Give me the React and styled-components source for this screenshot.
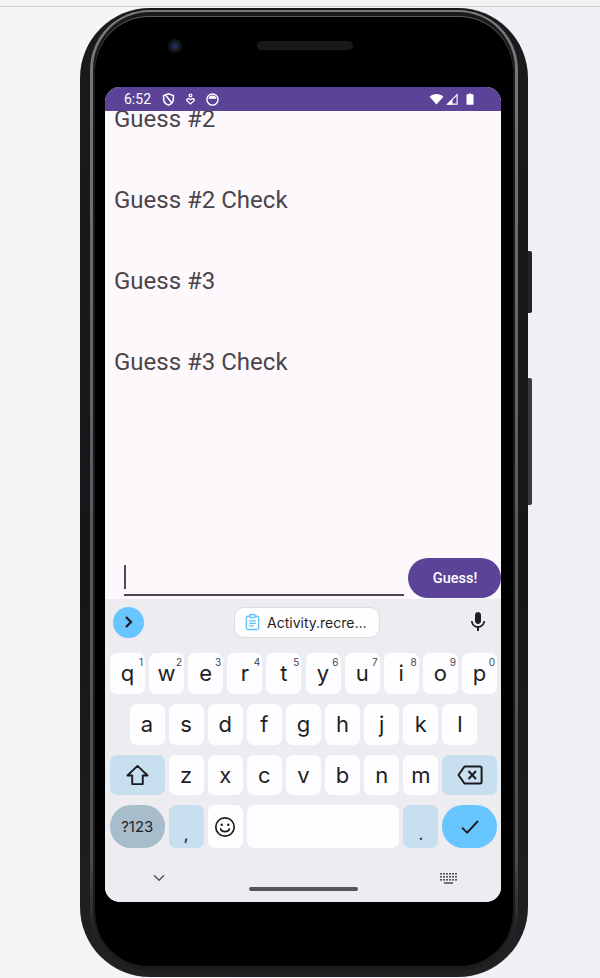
import React from "react";
import styled, { createGlobalStyle } from "styled-components";

const Global = createGlobalStyle`
  html, body { margin: 0; padding: 0; background: #f2f1f5; }
  body { font-family: "Roboto", "Liberation Sans", sans-serif; }
  * { box-sizing: border-box; }
`;

const Page = styled.div`
  width: 600px;
  height: 978px;
  overflow: hidden;
  background: linear-gradient(90deg, #f5f4f7 0%, #f5f4f7 13%, #f0eff3 90%);
  display: flex;
  flex-direction: column;
`;
const TopStrip = styled.div`
  height: 7px;
  flex: none;
  background: #f3f3f3;
  border-bottom: 1px solid #cfcfd1;
`;
const Device = styled.div`
  position: relative;
  flex: none;
  width: 448px;
  height: 969px;
  margin: 1px 0 0 80px;
  padding: 2px 10px 6px 10px;
  border-radius: 70px;
  background: linear-gradient(180deg, #1a1a1c 0%, #161618 60%, #212123 100%);
`;
const SideButton = styled.div`
  position: absolute;
  right: -4px;
  top: ${(p) => p.$top}px;
  width: 4px;
  height: ${(p) => p.$h}px;
  border-radius: 0 2px 2px 0;
  background: ${(p) => p.$c};
`;
const Rim = styled.div`
  height: 100%;
  padding: 2px 3px 3px;
  border-radius: 60px;
  background: linear-gradient(180deg, #7a7a7d 0%, #5c5c60 50%, #4c4c4f 88%, #232325 96%, #1c1c1e 100%);
`;
const Bezel = styled.div`
  height: 100%;
  border-radius: 57px;
  background: #1a1a1c;
  padding: 5px 2px 2px;
`;
const Front = styled.div`
  height: 100%;
  border-radius: 54px;
  background: #000;
  box-shadow: 0 -1px 0 #5a5a5e;
  padding: 0 13px 0 10px;
  display: flex;
  flex-direction: column;
`;
const Earpiece = styled.div`
  height: 70px;
  flex: none;
  padding: 20px 0 0 63px;
  display: flex;
  align-items: flex-start;
`;
const Camera = styled.div`
  width: 14px;
  height: 14px;
  margin-top: 2px;
  border-radius: 50%;
  background: radial-gradient(circle, #1c2a52 0 25%, #14151b 45%, #0f0f11 100%);
`;
const Speaker = styled.div`
  width: 96px;
  height: 9px;
  margin: 4px 0 0 75px;
  border-radius: 5px;
  background: #19191a;
`;
const Screen = styled.div`
  width: 396px;
  height: 815px;
  flex: none;
  border-radius: 15px;
  overflow: hidden;
  background: #fdf8fc;
  display: flex;
  flex-direction: column;
`;
const StatusBar = styled.div`
  height: 24px;
  flex: none;
  background: #5b4397;
  color: #fff;
  display: flex;
  align-items: center;
  padding: 0 27px 0 19px;
`;
const Clock = styled.span`
  font-size: 14px;
  line-height: 24px;
  width: 38px;
`;
const StatusIcons = styled.div`
  display: flex;
  align-items: center;
  gap: 11px;
`;
const StatusRight = styled.div`
  margin-left: auto;
  display: flex;
  align-items: center;
  gap: 2px;
`;
const BatterySlot = styled.div`
  display: flex;
  margin-left: 6px;
`;
const Content = styled.div`
  flex: 1;
  min-height: 0;
  overflow: hidden;
  padding-left: 9px;
`;
const GuessList = styled.div`
  margin-top: -32px;
`;
const Guess = styled.div`
  height: 81px;
  line-height: 81px;
  font-size: 24px;
  color: #49454a;
`;
const InputRow = styled.div`
  height: 41px;
  flex: none;
  display: flex;
  padding-left: 19px;
`;
const Field = styled.div`
  width: 280px;
  height: 38px;
  margin-right: 4px;
  border-bottom: 2px solid #4b4656;
  padding: 7px 0 0 0;
`;
const Caret = styled.div`
  width: 2px;
  height: 24px;
  background: #4f4a58;
`;
const GuessButton = styled.button`
  width: 93px;
  height: 40px;
  border: 0;
  border-radius: 20px;
  background: #5b4397;
  color: #fff;
  font: 500 14.5px "Roboto", sans-serif;
  padding: 0 0 0 1px;
`;
const Keyboard = styled.div`
  height: 303px;
  flex: none;
  background: #edecf0;
  display: flex;
  flex-direction: column;
  padding: 0 4px 0 5px;
`;
const Suggestions = styled.div`
  height: 54px;
  flex: none;
  display: flex;
  align-items: center;
  padding: 0 0 8px 3px;
`;
const RoundToggle = styled.div`
  width: 31px;
  height: 31px;
  flex: none;
  border-radius: 50%;
  background: #67c6ff;
  display: flex;
  align-items: center;
  justify-content: center;
`;
const Chip = styled.div`
  width: 146px;
  height: 31px;
  margin-left: 90px;
  flex: none;
  border-radius: 10px;
  border: 1px solid #dcdcdf;
  background: #fefeff;
  display: flex;
  align-items: center;
  gap: 7px;
  padding-left: 10px;
  font-family: "Inter", "Roboto", sans-serif;
  font-size: 14px;
  font-weight: 400;
  color: #1f1f22;
  white-space: nowrap;
`;
const MicSlot = styled.div`
  margin-left: 86px;
  display: flex;
`;
const Keys = styled.div`
  display: flex;
  flex-direction: column;
  gap: 10px;
`;
const KeyRow = styled.div`
  height: ${(p) => p.$h}px;
  display: grid;
  grid-template-columns: repeat(20, 1fr);
  column-gap: 4.11px;
`;
const tones = {
  plain: "#fefdff",
  soft: "#c8dff0",
  mode: "#a8bdcc",
  action: "#67c6ff",
};
const Key = styled.div`
  position: relative;
  grid-column: ${(p) => (p.$start ? `${p.$start} / ` : "")}span ${(p) => p.$span || 2};
  border-radius: ${(p) => (p.$pill ? "21px" : "7px")};
  background: ${(p) => tones[p.$tone || "plain"]};
  color: #1f1f22;
  font-family: "Inter", "Roboto", sans-serif;
  font-size: ${(p) => p.$size || 22}px;
  font-weight: 400;
  line-height: 1;
  display: flex;
  align-items: center;
  justify-content: center;
`;
const Digit = styled.span`
  position: absolute;
  top: 4px;
  right: 2px;
  font-size: 10px;
  font-weight: 400;
  color: #47474c;
`;
const LowPunct = styled.span`
  font-size: 16px;
  font-weight: 500;
  padding-top: 14px;
`;
const NavBar = styled.div`
  flex: 1;
  display: flex;
  align-items: flex-start;
  padding: 26px 0 0 43px;
`;
const HomePill = styled.div`
  width: 109px;
  height: 4px;
  margin: 13px 0 0 84px;
  border-radius: 2px;
  background: #55555a;
`;
const KbdIcon = styled.div`
  margin: -1px 0 0 82px;
  display: flex;
`;

const Shield = () => (
  <svg width="13" height="13" viewBox="0 0 14 15" fill="none" stroke="#fff" strokeWidth="1.8">
    <path d="M7 1 L12.6 3 V7 C12.6 10.4 10.4 12.8 7 14 C3.6 12.8 1.4 10.4 1.4 7 V3 Z" />
    <path d="M4 3 L10.5 11" />
  </svg>
);
const Pin = () => (
  <svg width="9" height="12" viewBox="0 0 10 13" fill="none" stroke="#fff" strokeWidth="1.5">
    <circle cx="5" cy="2.6" r="1.5" />
    <path d="M5 12 L1.2 8.6 C0.4 7.6 1.2 6 2.6 6.2 L5 7.2 L7.4 6.2 C8.8 6 9.6 7.6 8.8 8.6 Z" />
  </svg>
);
const Disc = () => (
  <svg width="13" height="13" viewBox="0 0 14 14">
    <circle cx="7" cy="7" r="6" fill="none" stroke="#fff" strokeWidth="1.5" />
    <path d="M2.6 6.2 C3 3.8 4.8 2.6 7 2.6 C9.2 2.6 11 3.8 11.4 6.2 Z" fill="#fff" />
  </svg>
);
const Wifi = () => (
  <svg width="15" height="12" viewBox="0 0 16 13">
    <path d="M0.5 4 C4.5 0.2 11.5 0.2 15.5 4 L8 12.5 Z" fill="#fff" />
  </svg>
);
const Signal = () => (
  <svg width="12" height="12" viewBox="0 0 13 13">
    <path d="M12 1.8 V12 H1.8 Z" fill="none" stroke="#fff" strokeWidth="1.2" />
    <path d="M7 6.5 V12.5 H0.5 Z" fill="#fff" />
  </svg>
);
const Battery = () => (
  <svg width="8" height="12" viewBox="0 0 9 14">
    <path d="M3 0.5 H6 V1.6 H7.8 C8.3 1.6 8.6 2 8.6 2.4 V13 C8.6 13.5 8.3 13.8 7.8 13.8 H1.2 C0.7 13.8 0.4 13.5 0.4 13 V2.4 C0.4 2 0.7 1.6 1.2 1.6 H3 Z" fill="#fff" />
  </svg>
);
const Chevron = () => (
  <svg width="12" height="14" viewBox="0 0 12 14" fill="none" stroke="#17171c" strokeWidth="2.2">
    <path d="M3 2 L8 7 L3 12" />
  </svg>
);
const Clipboard = () => (
  <svg width="15" height="18" viewBox="0 0 17 19" fill="none" stroke="#62c2fb" strokeWidth="1.5">
    <rect x="1.5" y="3" width="14" height="15" rx="2" />
    <rect x="5.5" y="1" width="6" height="3.6" rx="1" fill="#eaf6ff" />
    <path d="M4.6 8.2 H12.4 M4.6 11 H12.4 M4.6 13.8 H10" />
  </svg>
);
const Mic = () => (
  <svg width="24" height="24" viewBox="0 0 24 24" fill="#1f1f22">
    <path d="M12 14c1.66 0 2.99-1.34 2.99-3L15 5c0-1.66-1.34-3-3-3S9 3.34 9 5v6c0 1.66 1.34 3 3 3zm5.3-3c0 3-2.54 5.1-5.3 5.1S6.7 14 6.7 11H5c0 3.41 2.72 6.23 6 6.72V21h2v-3.28c3.28-.48 6-3.3 6-6.72h-1.7z" />
  </svg>
);
const ShiftIcon = () => (
  <svg width="23" height="22" viewBox="0 0 24 22" fill="none" stroke="#1c1c20" strokeWidth="2" strokeLinejoin="round">
    <path d="M12 1.5 L22.5 11.5 H17.5 V20.5 H6.5 V11.5 H1.5 Z" />
  </svg>
);
const BackIcon = () => (
  <svg width="26" height="20" viewBox="0 0 26 20" fill="none" stroke="#1c1c20" strokeWidth="2" strokeLinejoin="round">
    <path d="M7.5 1.5 H23 C24 1.5 24.6 2.1 24.6 3 V17 C24.6 17.9 24 18.5 23 18.5 H7.5 L1.5 10 Z" />
    <path d="M11.5 6 L19 14 M19 6 L11.5 14" />
  </svg>
);
const Smile = () => (
  <svg width="22" height="22" viewBox="0 0 22 22" fill="none" stroke="#1c1c20" strokeWidth="1.7">
    <circle cx="11" cy="11" r="9.2" />
    <circle cx="7.7" cy="8.8" r="1.2" fill="#1c1c20" stroke="none" />
    <circle cx="14.3" cy="8.8" r="1.2" fill="#1c1c20" stroke="none" />
    <path d="M6.6 13 C8 16.6 14 16.6 15.4 13" strokeLinecap="round" />
  </svg>
);
const Check = () => (
  <svg width="20" height="16" viewBox="0 0 20 16" fill="none" stroke="#1c1c20" strokeWidth="1.9">
    <path d="M2 8.6 L7.2 13.6 L18 2" />
  </svg>
);
const NavDown = () => (
  <svg width="12" height="8" viewBox="0 0 12 8" fill="none" stroke="#55555a" strokeWidth="1.5">
    <path d="M1 1.2 L6 6.2 L11 1.2" />
  </svg>
);
const KbdDots = () => (
  <svg width="17" height="11" viewBox="0 0 17 11" fill="#55555a">
    {[0, 3, 6].map((y) =>
      [0, 3, 6, 9, 12, 15].map((x) => <rect key={`${x}-${y}`} x={x} y={y} width="2" height="1.6" />)
    )}
    <rect x="4" y="9.2" width="9" height="1.6" />
  </svg>
);

const row1 = [["q", 1], ["w", 2], ["e", 3], ["r", 4], ["t", 5], ["y", 6], ["u", 7], ["i", 8], ["o", 9], ["p", 0]];
const row2 = ["a", "s", "d", "f", "g", "h", "j", "k", "l"];
const row3 = ["z", "x", "c", "v", "b", "n", "m"];

export default function App() {
  return (
    <Page>
      <Global />
      <TopStrip />
      <Device>
        <SideButton $top={243} $h={62} $c="#232325" />
        <SideButton $top={370} $h={127} $c="#3a3a3d" />
        <Rim>
          <Bezel>
            <Front>
              <Earpiece>
                <Camera />
                <Speaker />
              </Earpiece>
              <Screen>
                <StatusBar>
                  <Clock>6:52</Clock>
                  <StatusIcons>
                    <Shield />
                    <Pin />
                    <Disc />
                  </StatusIcons>
                  <StatusRight>
                    <Wifi />
                    <Signal />
                    <BatterySlot>
                      <Battery />
                    </BatterySlot>
                  </StatusRight>
                </StatusBar>
                <Content>
                  <GuessList>
                    <Guess>Guess #2</Guess>
                    <Guess>Guess #2 Check</Guess>
                    <Guess>Guess #3</Guess>
                    <Guess>Guess #3 Check</Guess>
                  </GuessList>
                </Content>
                <InputRow>
                  <Field>
                    <Caret />
                  </Field>
                  <GuessButton>Guess!</GuessButton>
                </InputRow>
                <Keyboard>
                  <Suggestions>
                    <RoundToggle>
                      <Chevron />
                    </RoundToggle>
                    <Chip>
                      <Clipboard />
                      Activity.recre…
                    </Chip>
                    <MicSlot>
                      <Mic />
                    </MicSlot>
                  </Suggestions>
                  <Keys>
                    <KeyRow $h={40.5}>
                      {row1.map(([l, d]) => (
                        <Key key={l}>
                          {l}
                          <Digit>{d}</Digit>
                        </Key>
                      ))}
                    </KeyRow>
                    <KeyRow $h={41}>
                      {row2.map((l, i) => (
                        <Key key={l} $start={i === 0 ? 2 : undefined}>
                          {l}
                        </Key>
                      ))}
                    </KeyRow>
                    <KeyRow $h={40.5}>
                      <Key $span={3} $tone="soft">
                        <ShiftIcon />
                      </Key>
                      {row3.map((l) => (
                        <Key key={l}>{l}</Key>
                      ))}
                      <Key $span={3} $tone="soft">
                        <BackIcon />
                      </Key>
                    </KeyRow>
                    <KeyRow $h={43}>
                      <Key $span={3} $tone="mode" $pill $size={15}>
                        ?123
                      </Key>
                      <Key $tone="soft">
                        <LowPunct>,</LowPunct>
                      </Key>
                      <Key>
                        <Smile />
                      </Key>
                      <Key $span={8} />
                      <Key $tone="soft">
                        <LowPunct>.</LowPunct>
                      </Key>
                      <Key $span={3} $tone="action" $pill>
                        <Check />
                      </Key>
                    </KeyRow>
                  </Keys>
                  <NavBar>
                    <NavDown />
                    <HomePill />
                    <KbdIcon>
                      <KbdDots />
                    </KbdIcon>
                  </NavBar>
                </Keyboard>
              </Screen>
            </Front>
          </Bezel>
        </Rim>
      </Device>
    </Page>
  );
}
